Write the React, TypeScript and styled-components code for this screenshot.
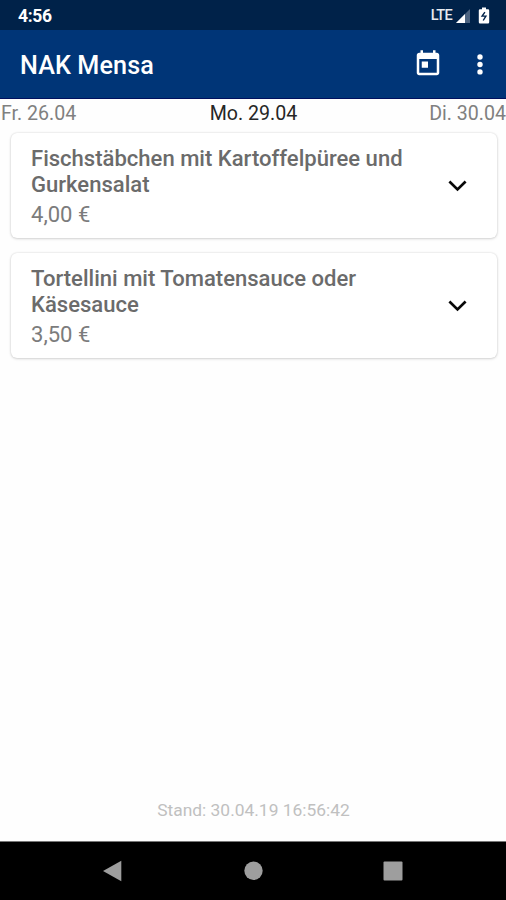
import React from "react";
import styled, { createGlobalStyle } from "styled-components";

const GlobalStyle = createGlobalStyle`
  * { box-sizing: border-box; }
  body { margin: 0; background: #fff; font-family: Roboto, "Liberation Sans", sans-serif; }
`;

const Screen = styled.div`
  width: 506px;
  height: 900px;
  display: flex;
  flex-direction: column;
  overflow: hidden;
  background: #fefefe;
`;

const StatusBar = styled.div`
  height: 30px;
  flex: none;
  padding: 2px 16px 0 18px;
  display: flex;
  align-items: center;
  justify-content: space-between;
  background: #002249;
  color: #fff;
`;

const Clock = styled.span`
  font-size: 17.5px;
  font-weight: 700;
  letter-spacing: -0.3px;
`;

const StatusIcons = styled.div`
  display: flex;
  align-items: center;
  color: #e6eaf0;
`;

const Network = styled.span`
  margin: -2px 3px 0 0;
  font-size: 14.5px;
  font-weight: 500;
  letter-spacing: -0.6px;
`;

const AppBar = styled.header`
  height: 69px;
  flex: none;
  padding: 0 14px 0 20px;
  display: flex;
  align-items: center;
  background: #003577;
  border-bottom: 1px solid #00105e;
  color: #fff;
`;

const Title = styled.h1`
  flex: 1;
  margin: 3px 0 0;
  font-size: 25.2px;
  font-weight: 500;
  line-height: 30px;
  letter-spacing: 0.1px;
`;

const IconButton = styled.button<{ $gap?: number }>`
  display: flex;
  padding: 0;
  border: 0;
  margin-right: ${(p) => p.$gap ?? 0}px;
  background: none;
  color: inherit;
`;

const DateStrip = styled.nav`
  height: 28px;
  flex: none;
  display: grid;
  grid-template-columns: 1fr auto 1fr;
  padding: 2px 0 0 1px;
  font-size: 19.6px;
  line-height: 25px;
`;

const DateLabel = styled.span<{ $active?: boolean; $end?: boolean }>`
  color: ${(p) => (p.$active ? "#262626" : "#808080")};
  text-align: ${(p) => (p.$end ? "right" : "left")};
  white-space: nowrap;
`;

const MealList = styled.main`
  flex: 1;
  display: flex;
  flex-direction: column;
  gap: 15px;
  padding: 6px 9px 0 11px;
`;

const Card = styled.article`
  height: 105px;
  display: flex;
  align-items: center;
  padding: 0 26px 0 20px;
  border-radius: 6px;
  background: #fff;
  box-shadow: 0 0 2px rgba(0, 0, 0, 0.15), 0 1px 3px rgba(0, 0, 0, 0.14);
`;

const MealText = styled.div`
  flex: 1;
  align-self: flex-start;
  padding-top: 13px;
  font-size: 22.05px;
  line-height: 26px;
  color: #7c7c7c;
`;

const MealName = styled.h2`
  width: 385px;
  margin: 0 0 4px;
  font: inherit;
  font-weight: 500;
  color: #6b6b6b;
`;

const Price = styled.p`
  margin: 0;
`;

const Updated = styled.footer`
  height: 42px;
  flex: none;
  padding-left: 1px;
  text-align: center;
  font-size: 17.4px;
  line-height: 22px;
  color: #c0c0c0;
`;

const NavBar = styled.nav`
  height: 59px;
  flex: none;
  display: flex;
  justify-content: space-between;
  padding: 0 103px 0 102px;
  align-items: center;
  background: #000;
  border-top: 1px solid #777;
  color: #9e9e9e;
`;

const meals = [
  { name: "Fischstäbchen mit Kartoffelpüree und Gurkensalat", price: "4,00 €" },
  { name: "Tortellini mit Tomatensauce oder Käsesauce", price: "3,50 €" },
];

const SignalIcon = () => (
  <svg width="16" height="16" viewBox="0 0 16 16">
    <path d="M15 1v14H1z" fill="#4c6380" />
    <path d="M10 6v9H1z" fill="#fff" />
  </svg>
);

const BatteryIcon = () => (
  <svg width="12" height="18" viewBox="0 0 12 18">
    <path d="M4 .5h4v1.800h2q1.200 0 1.200 1.200v11.800q0 1.200-1.200 1.200H2Q.8 16.500 .8 15.300V3.500Q.8 2.300 2 2.300h2z" fill="#fff" />
    <path
      d="M6.900 5.200 4.100 9.100h3.800L5.200 13.500"
      fill="none"
      stroke="#002249"
      strokeWidth="1.400"
    />
  </svg>
);

const CalendarIcon = () => (
  <svg width="30" height="30" viewBox="0 0 24 24" fill="currentColor">
    <path d="M19 3h-1V1h-2v2H8V1H6v2H5c-1.110 0-1.990.9-1.990 2L3 19c0 1.100.89 2 2 2h14c1.100 0 2-.9 2-2V5c0-1.100-.9-2-2-2zm0 16H5V8h14v11zM7 10h5v5H7z" />
  </svg>
);

const MoreIcon = () => (
  <svg width="24" height="30" viewBox="0 0 24 30" fill="currentColor">
    <circle cx="12" cy="8" r="2.700" />
    <circle cx="12" cy="15.500" r="2.700" />
    <circle cx="12" cy="22.900" r="2.700" />
  </svg>
);

const ChevronIcon = () => (
  <svg width="26" height="26" viewBox="0 0 26 26" fill="none" stroke="#080808" strokeWidth="2.700">
    <path d="M4.400 8.500 12.500 16.400l8.100-7.900" />
  </svg>
);

const Gap = styled.span`
  width: 7px;
`;

export default function App() {
  return (
    <Screen>
      <GlobalStyle />
      <StatusBar>
        <Clock>4:56</Clock>
        <StatusIcons>
          <Network>LTE</Network>
          <SignalIcon />
          <Gap />
          <BatteryIcon />
        </StatusIcons>
      </StatusBar>
      <AppBar>
        <Title>NAK Mensa</Title>
        <IconButton $gap={25} aria-label="Kalender">
          <CalendarIcon />
        </IconButton>
        <IconButton aria-label="Mehr">
          <MoreIcon />
        </IconButton>
      </AppBar>
      <DateStrip>
        <DateLabel>Fr. 26.04</DateLabel>
        <DateLabel $active>Mo. 29.04</DateLabel>
        <DateLabel $end>Di. 30.04</DateLabel>
      </DateStrip>
      <MealList>
        {meals.map((meal) => (
          <Card key={meal.name}>
            <MealText>
              <MealName>{meal.name}</MealName>
              <Price>{meal.price}</Price>
            </MealText>
            <ChevronIcon />
          </Card>
        ))}
      </MealList>
      <Updated>Stand: 30.04.19 16:56:42</Updated>
      <NavBar>
        <svg width="20" height="22" viewBox="0 0 20 22" fill="currentColor">
          <path d="M1 11 19.300.7v20.600z" />
        </svg>
        <svg width="20" height="20" viewBox="0 0 20 20" fill="currentColor">
          <circle cx="10.500" cy="9.800" r="9.200" />
        </svg>
        <svg width="20" height="20" viewBox="0 0 20 20" fill="currentColor">
          <rect x=".5" y=".5" width="19" height="19" rx="1" />
        </svg>
      </NavBar>
    </Screen>
  );
}
